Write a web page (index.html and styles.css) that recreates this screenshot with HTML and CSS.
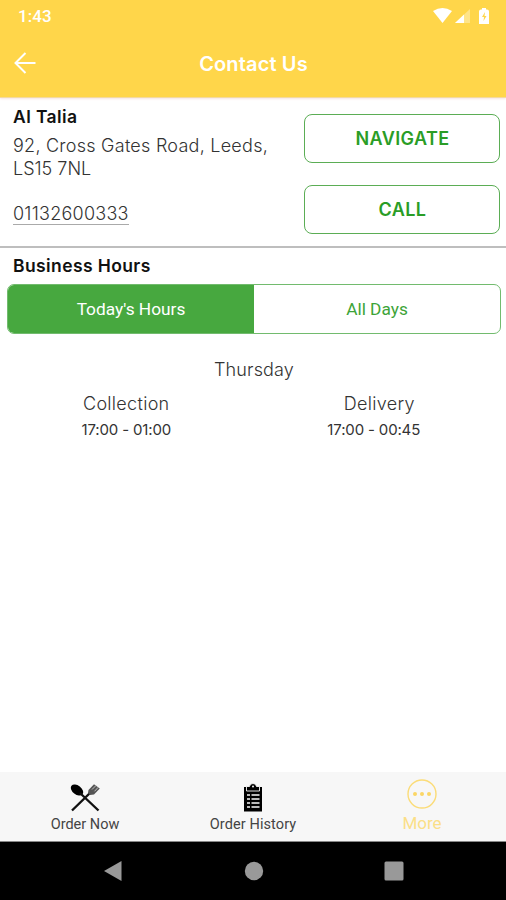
FILE: index.html
```html
<!DOCTYPE html>
<html lang="en">
<head>
<meta charset="utf-8">
<title>Contact Us</title>
<link rel="stylesheet" href="styles.css">
</head>
<body>
<div class="screen">
  <header class="top">
    <div class="status">
      <span class="clock">1:43</span>
      <svg class="status-icons" width="58" height="18" viewBox="0 0 58 18">
        <path d="M0 3Q9.500-3 19 3L9.500 15Z" fill="#fff"/>
        <path d="M37 1V15H22Z" fill="#fff" opacity=".35"/>
        <path d="M31 6.500V15H22Z" fill="#fff"/>
        <path d="M49 0h4v1.500h1q2 0 2 2V16H46V3.500q0-2 2-2h1z" fill="#fff"/>
        <path d="M52 4l-3 5h2l-.5 4 3-5h-2z" fill="#ffd64a"/>
      </svg>
    </div>
    <div class="title-bar">
      <svg class="back" width="22" height="22" viewBox="0 0 22 22" fill="none" stroke="#fff" stroke-width="2">
        <path d="M21.500 11H1.500M11.500 1L1.500 11l10 10"/>
      </svg>
      <h1>Contact Us</h1>
    </div>
  </header>
  <section class="contact">
    <div class="details">
      <h2 class="name">Al Talia</h2>
      <p class="address"><span class="street">92, Cross Gates Road, Leeds,</span><br><span class="postcode">LS15 7NL</span></p>
      <a class="phone">01132600333</a>
    </div>
    <div class="actions">
      <button class="navigate">NAVIGATE</button>
      <button class="call">CALL</button>
    </div>
  </section>
  <section class="hours">
    <h2 class="hours-title">Business Hours</h2>
    <div class="tabs">
      <div class="tab active">Today's Hours</div>
      <div class="tab">All Days</div>
    </div>
    <p class="day">Thursday</p>
    <div class="services">
      <div class="service"><span class="kind">Collection</span><span class="time">17:00 - 01:00</span></div>
      <div class="service"><span class="kind delivery">Delivery</span><span class="time">17:00 - 00:45</span></div>
    </div>
  </section>
  <nav class="nav">
    <div class="item">
      <svg width="32" height="30" viewBox="0 0 32 30">
        <ellipse cx="8" cy="7" rx="4.500" ry="7" transform="rotate(-52 8 7)" fill="#000"/>
        <path d="M11 10L29.500 27.500M3 27.500L22 9" stroke="#111" stroke-width="2.400" fill="none"/>
        <path d="M19.500 7L25 1.200l5.800 4.300L25 11.500l-4 .5-2-2z" fill="#555"/>
        <path d="M23 6.500l4-4M25.500 8.300l3.700-4" stroke="#ccc" stroke-width=".9"/>
      </svg>
      <span class="order-now">Order Now</span>
    </div>
    <div class="item">
      <svg width="20" height="30" viewBox="0 0 20 30">
        <path d="M1 4h18v24.500H1z" fill="#000"/>
        <path d="M3.500 3.500h3q.5-3 3.500-3t3.500 3h3V8h-13z" fill="#000" stroke="#f7f7f7" stroke-width=".9"/>
        <circle cx="10" cy="3.500" r="1" fill="#f7f7f7"/>
        <path d="M4 12h3M4 16h3M4 20h3M4 24h3M8.500 12h8M8.500 16h8M8.500 20h8M8.500 24h8" stroke="#f7f7f7" stroke-width="1.700"/>
      </svg>
      <span class="order-history">Order History</span>
    </div>
    <div class="item more">
      <svg width="30" height="30" viewBox="0 0 30 30">
        <circle cx="15" cy="15" r="14" fill="none" stroke="#fbdc78" stroke-width="1.400"/>
        <circle cx="8" cy="15" r="2" fill="#fbd665"/><circle cx="15" cy="15" r="2" fill="#fbd665"/><circle cx="22" cy="15" r="2" fill="#fbd665"/>
      </svg>
      <span>More</span>
    </div>
  </nav>
  <footer class="system">
    <svg width="20" height="22" viewBox="0 0 20 22"><path d="M1 11L18.500 1v20z" fill="#999"/></svg>
    <svg width="20" height="20" viewBox="0 0 20 20"><circle cx="10" cy="10" r="9.200" fill="#999"/></svg>
    <svg width="20" height="20" viewBox="0 0 20 20"><rect x=".5" y=".5" width="19" height="19" rx="1.500" fill="#999"/></svg>
  </footer>
</div>
</body>
</html>
```
FILE: styles.css
```css
* { box-sizing: border-box; }
body { margin: 0; background: #fff; }
h1, h2, p { margin: 0; }
.screen { width: 506px; height: 900px; display: flex; flex-direction: column; overflow: hidden; font-family: Inter, sans-serif; font-weight: 300; color: #333; }
.top { height: 98px; background: #ffd64a; color: #fff; border-bottom: 1px solid #f3d9a0; box-shadow: 0 1px 2px #f5e4e4; flex: none; }
.status { height: 32px; display: flex; justify-content: space-between; padding: 8px 15px 0 18px; }
.clock { font: 500 17px/17px Roboto, sans-serif; letter-spacing: .1px; }
.title-bar { height: 62px; display: grid; grid-template-columns: 60px 1fr 60px; align-items: center; }
.back { margin-left: 14px; }
h1 { font-size: 20px; line-height: 24px; padding: 1px 0 0 1px; font-weight: 600; text-align: center; letter-spacing: .15px; }
.contact { height: 150px; border-bottom: 2px solid #bebebe; display: flex; justify-content: space-between; padding: 0 6px 0 13px; flex: none; }
.details { padding-top: 7px; }
.name, .hours-title { font-size: 17.500px; line-height: 23px; color: #111; font-weight: 600; letter-spacing: .4px; }
.address { font-size: 18px; line-height: 23px; margin-top: 6px; white-space: nowrap; }
.street { letter-spacing: .25px; }
.phone { display: inline-block; font-size: 18px; line-height: 20px; margin-top: 24px; border-bottom: 1px solid #aaa; letter-spacing: .25px; }
.actions { width: 196px; padding-top: 16px; display: flex; flex-direction: column; gap: 22px; }
button { height: 49px; border: 1px solid #5bad55; border-radius: 8px; background: #fff; color: #2a9d26; font: 600 18px/24px Inter, sans-serif; letter-spacing: .4px; padding: 0 0 0 1px; }
.hours { flex: 1; padding: 6px 5px 0 7px; }
.hours-title { padding-left: 6px; }
.tabs { display: flex; height: 50px; margin-top: 7px; border: 1px solid #72bb6e; border-radius: 7px; overflow: hidden; font: 400 17.300px/49px Roboto, sans-serif; text-align: center; color: #3da438; }
.tab { flex: 1; }
.active { background: #47a83f; color: #fff; }
.day { text-align: center; font-size: 18px; line-height: 24px; margin-top: 24px; letter-spacing: .15px; }
.services { display: flex; margin: 10px 5px 0 -3px; }
.service { flex: 1; display: flex; flex-direction: column; align-items: center; }
.service + .service { padding-left: 3px; }
.kind { font-size: 18px; line-height: 24px; letter-spacing: .3px; }
.delivery { padding-left: 11px; }
.time { font-size: 15px; line-height: 20px; margin-top: 4px; font-weight: 400; letter-spacing: -.15px; }
.nav { height: 69px; background: #f7f7f7; display: flex; flex: none; padding-left: 1px; font: 400 14.500px/18px Roboto, sans-serif; color: #444; }
.item { flex: 1; display: flex; flex-direction: column; align-items: center; padding-top: 11px; gap: 3px; }
.order-history { letter-spacing: .1px; }
.more { padding: 7px 0 0 1px; gap: 5px; color: #fbdf88; font-size: 17px; }
.system { height: 59px; background: #000; border-top: 1px solid #888; display: flex; justify-content: space-between; align-items: center; padding: 0 102px 0 103px; flex: none; }
```
